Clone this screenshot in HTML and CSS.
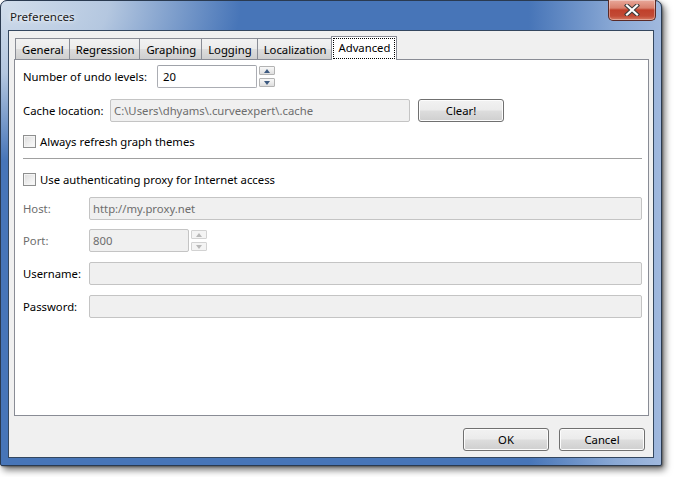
FILE: index.html
```html
<!DOCTYPE html>
<html>
<head>
<meta charset="utf-8">
<title>Preferences</title>
<link rel="stylesheet" href="styles.css">
</head>
<body>
<div class="window">
  <div class="titlebar">
    <span class="title">Preferences</span>
    <div class="close">
      <svg width="18" height="12" viewBox="0 0 18 12">
        <path d="M4 1.5 L14 10.5 M14 1.5 L4 10.5" stroke="#3a3a3a" stroke-width="4.2" stroke-linecap="square"/>
        <path d="M4 1.5 L14 10.5 M14 1.5 L4 10.5" stroke="#ffffff" stroke-width="2.2" stroke-linecap="square"/>
      </svg>
    </div>
  </div>
  <div class="client">
    <div class="tabs">
      <div class="tab">General</div>
      <div class="tab">Regression</div>
      <div class="tab">Graphing</div>
      <div class="tab">Logging</div>
      <div class="tab">Localization</div>
      <div class="tab active"><span class="focus">Advanced</span></div>
    </div>
    <div class="pane">
      <div class="row row-undo">
        <span class="label label-undo">Number of undo levels:</span>
        <div class="field field-undo">20</div>
        <div class="spin">
          <div class="spin-btn"><span class="arrow up"></span></div>
          <div class="spin-btn"><span class="arrow down"></span></div>
        </div>
      </div>
      <div class="row row-cache">
        <span class="label label-cache">Cache location:</span>
        <div class="field disabled field-cache">C:\Users\dhyams\.curveexpert\.cache</div>
        <div class="btn btn-clear">Clear!</div>
      </div>
      <div class="row row-check1">
        <span class="checkbox"></span>
        <span class="check-text">Always refresh graph themes</span>
      </div>
      <div class="separator"></div>
      <div class="row row-check2">
        <span class="checkbox"></span>
        <span class="check-text">Use authenticating proxy for Internet access</span>
      </div>
      <div class="row row-host">
        <span class="label label-proxy dim">Host:</span>
        <div class="field disabled field-wide">http://my.proxy.net</div>
      </div>
      <div class="row row-port">
        <span class="label label-proxy dim">Port:</span>
        <div class="field disabled field-port">800</div>
        <div class="spin disabled-spin">
          <div class="spin-btn"><span class="arrow up"></span></div>
          <div class="spin-btn"><span class="arrow down"></span></div>
        </div>
      </div>
      <div class="row row-user">
        <span class="label label-proxy">Username:</span>
        <div class="field disabled field-wide"></div>
      </div>
      <div class="row row-pass">
        <span class="label label-proxy">Password:</span>
        <div class="field disabled field-wide"></div>
      </div>
    </div>
    <div class="buttons">
      <div class="btn">OK</div>
      <div class="btn">Cancel</div>
    </div>
  </div>
</div>
</body>
</html>
```

FILE: styles.css
```css
* { box-sizing: border-box; }

html, body {
  margin: 0;
  padding: 0;
  background: #ffffff;
  width: 674px;
  height: 477px;
  overflow: hidden;
  font-family: "Segoe UI", "Noto Sans", "Liberation Sans", sans-serif;
  font-size: 11.3px;
  color: #000;
}

.window {
  width: 662px;
  height: 466px;
  border: 1px solid #2a3a50;
  border-radius: 7px 7px 2px 2px;
  padding: 0 7px 7px 7px;
  display: flex;
  flex-direction: column;
  background:
    radial-gradient(ellipse 240px 160px at 0 0, rgba(210,222,236,1) 0%, rgba(192,208,228,0.9) 45%, rgba(192,208,228,0) 100%),
    linear-gradient(to right, rgba(160,185,220,0) 0%, rgba(160,185,220,0) 80%, rgba(150,178,218,0.85) 93%, rgba(170,192,226,0.9) 100%),
    #4775b8;
  box-shadow: 3px 4px 7px rgba(0,0,0,0.55), 1px 1px 2px rgba(0,0,0,0.35);
  position: relative;
}

.titlebar {
  height: 29px;
  display: flex;
  align-items: center;
  justify-content: space-between;
  position: relative;
}

.title {
  padding-left: 2px;
  margin-top: 1px;
  color: #1b1b1b;
  font-size: 11.6px;
  text-shadow: 0 0 6px rgba(255,255,255,0.9), 0 0 3px rgba(255,255,255,0.8);
}

.close {
  position: absolute;
  top: -1px;
  right: -2px;
  width: 48px;
  height: 21px;
  border: 1px solid #5a2a26;
  border-top: none;
  border-radius: 0 0 5px 5px;
  background: linear-gradient(to bottom, #e8a89a 0%, #d9806d 40%, #c0402b 50%, #c24a35 80%, #d67a62 100%);
  box-shadow: inset 0 0 0 1px rgba(255,255,255,0.35);
  display: flex;
  align-items: center;
  justify-content: center;
}

.client {
  flex: 1;
  border: 1px solid #34475f;
  background: #f0f0f0;
  display: flex;
  flex-direction: column;
}

.tabs {
  display: flex;
  align-items: flex-end;
  height: 28px;
  padding: 5px 0 0 6px;
  position: relative;
  z-index: 2;
}

.tab {
  height: 21px;
  padding: 1px 5px 0 6px;
  border: 1px solid #898c95;
  border-bottom: none;
  border-left: none;
  background: linear-gradient(to bottom, #f2f2f2 0%, #ebebeb 50%, #dddddd 51%, #cfcfcf 100%);
  display: flex;
  align-items: center;
  color: #000;
}

.tab:first-child {
  border-left: 1px solid #898c95;
}

.tab.active {
  height: 24px;
  margin-bottom: -1px;
  background: #ffffff;
  border-left: 1px solid #898c95;
  margin-left: -1px;
  padding: 1px;
  align-items: stretch;
}

.focus {
  border: 1px dotted #000;
  padding: 0 4px;
  display: flex;
  align-items: center;
  padding-bottom: 3px;
}

.pane {
  height: 357px;
  margin: 0 4px 0 5px;
  border: 1px solid #898c95;
  background: #ffffff;
  padding: 5px 6px 0 8px;
  display: flex;
  flex-direction: column;
  position: relative;
  z-index: 1;
}

.row {
  display: flex;
  align-items: center;
  height: 23px;
  flex-shrink: 0;
}

.row-cache { margin-top: 11px; }
.row-check1 { margin-top: 8px; }
.row-check2 { margin-top: 9px; }
.row-host { margin-top: 6px; }
.row-port { margin-top: 9px; }
.row-user { margin-top: 10px; }
.row-pass { margin-top: 10px; }

.separator {
  height: 1px;
  background: #a0a0a0;
  margin-top: 5px;
  flex-shrink: 0;
}

.label { flex-shrink: 0; }
.label-undo { width: 134px; }
.label-cache { width: 87px; }
.label-proxy { width: 66px; }
.dim { color: #6d6d6d; }

.field {
  height: 23px;
  border: 1px solid #abadb3;
  border-top-color: #a0a3aa;
  border-radius: 2px;
  background: #ffffff;
  padding: 0 3px 1px 3px;
  display: flex;
  align-items: center;
  white-space: nowrap;
  overflow: hidden;
}

.field.disabled {
  background: #f0f0f0;
  border-color: #c4c4c4;
  color: #6d6d6d;
}

.field-undo { width: 100px; padding-left: 5px; }
.field-cache { width: 300px; }
.field-wide { flex: 1; }
.field-port { width: 100px; }

.spin {
  margin-left: 2px;
  width: 16px;
  height: 21px;
  display: flex;
  flex-direction: column;
  justify-content: space-between;
}

.spin-btn {
  height: 9px;
  border: 1px solid #b3b3b3;
  border-radius: 1px;
  background: linear-gradient(to bottom, #f8f8f8 0%, #ececec 50%, #dedede 100%);
  display: flex;
  align-items: center;
  justify-content: center;
}

.arrow {
  width: 0;
  height: 0;
  border-left: 3.5px solid transparent;
  border-right: 3.5px solid transparent;
}

.arrow.up { border-bottom: 4px solid #3d5a80; }
.arrow.down { border-top: 4px solid #3d5a80; }

.disabled-spin .spin-btn {
  border-color: #d2d2d2;
  background: #f4f4f4;
}
.disabled-spin .arrow.up { border-bottom-color: #b8b8b8; }
.disabled-spin .arrow.down { border-top-color: #b8b8b8; }

.checkbox {
  width: 13px;
  height: 13px;
  border: 1px solid #8e8f8f;
  background: linear-gradient(135deg, #dcdcdc 0%, #f0f0f0 60%, #fbfbfb 100%);
  box-shadow: inset 0 0 0 1px #f4f4f4;
  flex-shrink: 0;
  margin-right: 4px;
}

.btn {
  width: 86px;
  height: 23px;
  border: 1px solid #707070;
  border-radius: 3px;
  background: linear-gradient(to bottom, #f2f2f2 0%, #ebebeb 48%, #dddddd 52%, #cfcfcf 100%);
  box-shadow: inset 0 0 0 1px #fcfcfc;
  display: flex;
  align-items: center;
  justify-content: center;
  padding-bottom: 1px;
  flex-shrink: 0;
}

.btn-clear { margin-left: 8px; }

.buttons {
  display: flex;
  justify-content: flex-end;
  gap: 10px;
  margin: 12px 8px 0 0;
}
```
